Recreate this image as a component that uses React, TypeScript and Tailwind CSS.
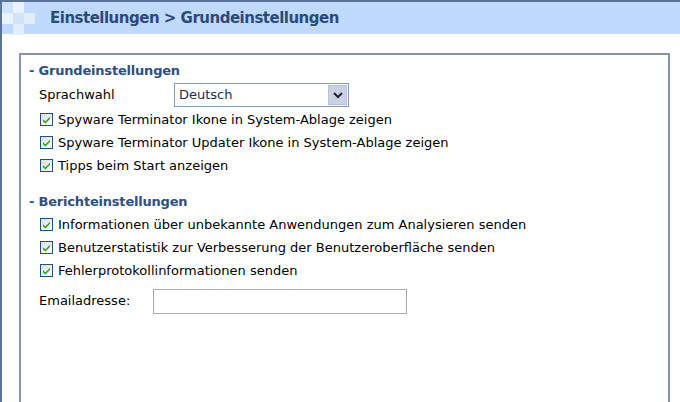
import { ReactNode } from "react";

function Check() {
  return (
    <span className="inline-flex h-[13px] w-[13px] shrink-0 items-center justify-center border border-[#1c5180] bg-gradient-to-br from-[#dcdcd7] to-white">
      <svg viewBox="0 0 9 9" className="h-[9px] w-[9px]">
        <path d="M1 4.2 L3.4 6.6 L8 1.8 L8 3.8 L3.4 8.4 L1 6.2 Z" fill="#21a121" />
      </svg>
    </span>
  );
}

function CheckRow({ children }: { children: ReactNode }) {
  return (
    <div className="flex h-[23px] items-center gap-[5px] pl-[11px]">
      <Check />
      <span>{children}</span>
    </div>
  );
}

function Heading({ children }: { children: ReactNode }) {
  return (
    <div className="h-[22px] text-[13px] font-bold leading-[22px] tracking-[-0.2px] text-[#2d4f86]">- {children}</div>
  );
}

export default function App() {
  return (
    <div
      className="flex h-[402px] w-[680px] flex-col overflow-hidden border-l-2 border-t-2 border-[#5b7394] bg-white text-[13px] text-black"
      style={{ fontFamily: "Tahoma, 'DejaVu Sans', sans-serif" }}
    >
      {/* header */}
      <div className="relative flex h-[32px] shrink-0 items-center bg-[#bfdafc] pl-[48px]">
        <div className="absolute left-0 top-0 grid grid-cols-3 grid-rows-3">
          <div className="h-[11px] w-[11px] bg-[#cfe1fb]" />
          <div className="h-[11px] w-[11px] bg-[#eaf2fd]" />
          <div className="h-[11px] w-[11px]" />
          <div className="h-[11px] w-[11px] bg-[#eaf2fd]" />
          <div className="h-[11px] w-[11px] bg-[#d2e3fb]" />
          <div className="h-[11px] w-[11px] bg-[#e2edfc]" />
          <div className="h-[11px] w-[11px]" />
          <div className="h-[11px] w-[11px] bg-[#e2edfc]" />
          <div className="h-[11px] w-[11px]" />
        </div>
        <span className="text-[15px] font-bold tracking-[-0.5px] text-[#2b4a7a]">Einstellungen &gt; Grundeinstellungen</span>
      </div>

      <div className="flex-1 pl-[17px] pr-[10px] pt-[19px]">
        <div className="h-full border-l-2 border-r-2 border-t-2 border-[#8594aa] px-[8px] pt-[5px]">
          <Heading>Grundeinstellungen</Heading>
          <div className="flex h-[26px] items-center pl-[10px]">
            <span className="w-[135px]">Sprachwahl</span>
            <div className="flex h-[24px] w-[175px] items-center border border-[#7f9db9] bg-white">
              <span className="flex-1 pl-[4px] text-[#1c2c4c]">Deutsch</span>
              <span className="mr-[1px] flex h-[20px] w-[19px] items-center justify-center border border-[#b6c3dc] bg-[#c9d1e4]">
                <svg viewBox="0 0 10 8" className="h-[8px] w-[10px]">
                  <path d="M1 2 L5 6 L9 2" fill="none" stroke="#222" strokeWidth="2" />
                </svg>
              </span>
            </div>
          </div>
          <CheckRow>Spyware Terminator Ikone in System-Ablage zeigen</CheckRow>
          <CheckRow>Spyware Terminator Updater Ikone in System-Ablage zeigen</CheckRow>
          <CheckRow>Tipps beim Start anzeigen</CheckRow>

          <div className="h-[14px]" />
          <Heading>Berichteinstellungen</Heading>
          <CheckRow>Informationen über unbekannte Anwendungen zum Analysieren senden</CheckRow>
          <CheckRow>Benutzerstatistik zur Verbesserung der Benutzeroberfläche senden</CheckRow>
          <CheckRow>Fehlerprotokollinformationen senden</CheckRow>
          <div className="mt-[6px] flex h-[26px] items-center pl-[10px]">
            <span className="w-[114px]">Emailadresse:</span>
            <div className="h-[25px] w-[254px] border border-[#a5acb5] bg-white" />
          </div>
        </div>
      </div>
    </div>
  );
}
